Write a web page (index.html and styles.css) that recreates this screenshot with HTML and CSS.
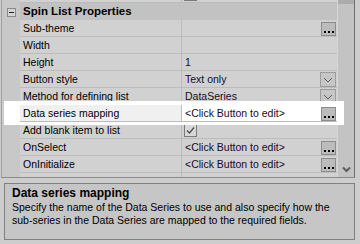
FILE: index.html
```html
<!DOCTYPE html>
<html lang="en">
<head>
    <meta charset="UTF-8">
    <title>Spin List Properties</title>
    <link rel="stylesheet" href="styles.css">
</head>
<body>
    <div class="window">
        <div class="grid">
            <div class="rows">
                <div class="row">
                    <div class="gutter"></div>
                    <div class="name"></div>
                    <div class="value"><span class="check"></span></div>
                </div>
                <div class="row category">
                    <div class="gutter"><span class="toggle"></span></div>
                    <div class="name">Spin List Properties</div>
                </div>
                <div class="row">
                    <div class="gutter"></div>
                    <div class="name">Sub-theme</div>
                    <div class="value"><span class="dots-btn"><i></i><i></i><i></i></span></div>
                </div>
                <div class="row">
                    <div class="gutter"></div>
                    <div class="name">Width</div>
                    <div class="value"></div>
                </div>
                <div class="row">
                    <div class="gutter"></div>
                    <div class="name">Height</div>
                    <div class="value">1</div>
                </div>
                <div class="row">
                    <div class="gutter"></div>
                    <div class="name">Button style</div>
                    <div class="value">Text only
                        <span class="drop-btn"><svg width="10" height="6" viewBox="0 0 10 6"><path d="M1 1 L5 5 L9 1" fill="none" stroke="#5a5a5a" stroke-width="1"/></svg></span>
                    </div>
                </div>
                <div class="row">
                    <div class="gutter"></div>
                    <div class="name">Method for defining list</div>
                    <div class="value">DataSeries
                        <span class="drop-btn"><svg width="10" height="6" viewBox="0 0 10 6"><path d="M1 1 L5 5 L9 1" fill="none" stroke="#5a5a5a" stroke-width="1"/></svg></span>
                    </div>
                </div>
                <div class="row selected">
                    <div class="gutter"></div>
                    <div class="name">Data series mapping</div>
                    <div class="value">&lt;Click Button to edit&gt;<span class="dots-btn"><i></i><i></i><i></i></span></div>
                </div>
                <div class="row">
                    <div class="gutter"></div>
                    <div class="name">Add blank item to list</div>
                    <div class="value"><span class="check checked"><svg width="11" height="11" viewBox="0 0 11 11"><path d="M2 5.5 L4.5 8 L9 2.5" fill="none" stroke="#4a4a4a" stroke-width="1.2"/></svg></span></div>
                </div>
                <div class="row">
                    <div class="gutter"></div>
                    <div class="name">OnSelect</div>
                    <div class="value">&lt;Click Button to edit&gt;<span class="dots-btn"><i></i><i></i><i></i></span></div>
                </div>
                <div class="row">
                    <div class="gutter"></div>
                    <div class="name">OnInitialize</div>
                    <div class="value">&lt;Click Button to edit&gt;<span class="dots-btn"><i></i><i></i><i></i></span></div>
                </div>
                <div class="row">
                    <div class="gutter"></div>
                    <div class="name">Enable list</div>
                    <div class="value"></div>
                </div>
            </div>
            <div class="scrollbar">
                <div class="thumb"></div>
                <svg class="scroll-down" width="9" height="7" viewBox="0 0 9 7"><path d="M1 1.5 L4.5 5 L8 1.5" fill="none" stroke="#5e5e5e" stroke-width="2"/></svg>
            </div>
        </div>
        <div class="help">
            <div class="help-title">Data series mapping</div>
            <div class="help-text">Specify the name of the Data Series to use and also specify how the<br>sub-series in the Data Series are mapped to the required fields.</div>
        </div>
    </div>
</body>
</html>
```

FILE: styles.css
```css
body {
    margin: 0;
    background: #cdcdcd;
    font-family: "Liberation Sans", Arial, sans-serif;
    font-size: 10.5px;
    color: #000;
}
.window {
    width: 360px;
    height: 244px;
    overflow: hidden;
}
.grid {
    display: flex;
    width: 352px;
    height: 177px;
    margin-left: 1px;
    border-left: 1px solid #a0a0a0;
    border-right: 1px solid #6e6e6e;
    border-bottom: 1px solid #8a8a8a;
    overflow: hidden;
}
.rows {
    width: 335px;
    margin-top: -14px;
    flex-shrink: 0;
}
.row {
    display: grid;
    grid-template-columns: 18px 161px 156px;
    height: 17px;
    position: relative;
}
.gutter {
    background: #c8c8c8;
}
.name {
    background: #d1d1d1;
    border-bottom: 1px solid #bcbcbc;
    padding-left: 3px;
    line-height: 16px;
    white-space: nowrap;
    overflow: hidden;
}
.value {
    display: flex;
    align-items: flex-start;
    background: #d1d1d1;
    border-bottom: 1px solid #bcbcbc;
    border-left: 1px solid #bcbcbc;
    padding-left: 3px;
    line-height: 16px;
    color: #150c28;
    white-space: nowrap;
}
.category .name {
    grid-column: 2 / 4;
    background: #c2c2c2;
    border-bottom-color: #c2c2c2;
    font-weight: bold;
    font-size: 11.5px;
}
.toggle {
    display: block;
    position: relative;
    width: 7px;
    height: 7px;
    margin: 5px 0 0 5px;
    border: 1px solid #8a8a8a;
    background: #d4d4d4;
}
.toggle::after {
    content: "";
    position: absolute;
    left: 1px;
    top: 3px;
    width: 5px;
    height: 1px;
    background: #222;
}
.dots-btn {
    display: flex;
    align-items: flex-end;
    justify-content: center;
    gap: 2px;
    box-sizing: border-box;
    width: 15px;
    height: 14px;
    margin: 2px 1px 0 auto;
    padding-bottom: 2px;
    border: 1px solid #8c8c8c;
    background: #bcbcbc;
}
.dots-btn i {
    width: 2px;
    height: 2px;
    background: #000;
}
.drop-btn {
    display: flex;
    align-items: center;
    justify-content: center;
    box-sizing: border-box;
    width: 16px;
    height: 15px;
    margin: 1px 1px 0 auto;
    border: 1px solid #9c9c9c;
    background: #c6c6c6;
}
.check {
    display: flex;
    align-items: center;
    justify-content: center;
    box-sizing: border-box;
    width: 13px;
    height: 13px;
    margin-top: 2px;
    margin-left: -1px;
    border: 1px solid #7a7a7a;
    background: #d8d8d8;
}
.selected {
    z-index: 1;
}
.selected::before {
    content: "";
    position: absolute;
    top: -4px;
    bottom: -3px;
    left: 2px;
    right: -7px;
    background: #fff;
    z-index: -1;
}
.selected .gutter {
    background: transparent;
}
.selected .name {
    background: #f0f0f0;
}
.selected .value {
    background: #fff;
}
.scrollbar {
    display: flex;
    flex-direction: column;
    align-items: center;
    width: 16px;
    border-left: 1px solid #d6d6d6;
    background: #c3c3c3;
}
.thumb {
    width: 100%;
    height: 4px;
    background: #acacac;
}
.scroll-down {
    margin-top: auto;
    margin-bottom: 4px;
}
.help {
    box-sizing: border-box;
    width: 351px;
    height: 57px;
    margin: 5px 0 0 4px;
    padding: 3px 0 0 7px;
    border: 1px solid #808080;
    background: #c6c6c6;
}
.help-title {
    font-weight: bold;
    font-size: 12px;
    line-height: 13px;
}
.help-text {
    margin-top: 1px;
    line-height: 13px;
}
```
